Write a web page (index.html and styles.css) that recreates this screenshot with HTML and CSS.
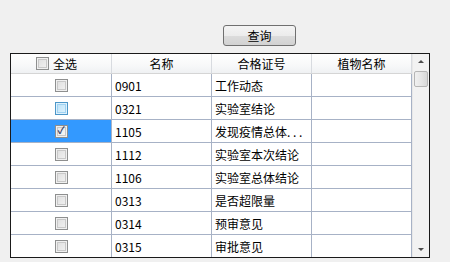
FILE: index.html
```html
<!DOCTYPE html>
<html lang="zh-CN">
<head>
    <meta charset="UTF-8">
    <title>查询</title>
    <link rel="stylesheet" href="styles.css">
</head>
<body>
    <div class="toolbar">
        <button class="query-btn">查询</button>
    </div>
    <div class="grid">
        <div class="grid-body">
            <div class="row head">
                <div class="cell check-col"><span class="box"></span><span class="label">全选</span></div>
                <div class="cell">名称</div>
                <div class="cell">合格证号</div>
                <div class="cell">植物名称</div>
            </div>
            <div class="row">
                <div class="cell check-col"><span class="box"></span></div>
                <div class="cell text">0901</div>
                <div class="cell text">工作动态</div>
                <div class="cell"></div>
            </div>
            <div class="row">
                <div class="cell check-col"><span class="box hover"></span></div>
                <div class="cell text">0321</div>
                <div class="cell text">实验室结论</div>
                <div class="cell"></div>
            </div>
            <div class="row">
                <div class="cell check-col selected"><span class="box checked">✓</span></div>
                <div class="cell text">1105</div>
                <div class="cell text">发现疫情总体. . .</div>
                <div class="cell"></div>
            </div>
            <div class="row">
                <div class="cell check-col"><span class="box"></span></div>
                <div class="cell text">1112</div>
                <div class="cell text">实验室本次结论</div>
                <div class="cell"></div>
            </div>
            <div class="row">
                <div class="cell check-col"><span class="box"></span></div>
                <div class="cell text">1106</div>
                <div class="cell text">实验室总体结论</div>
                <div class="cell"></div>
            </div>
            <div class="row">
                <div class="cell check-col"><span class="box"></span></div>
                <div class="cell text">0313</div>
                <div class="cell text">是否超限量</div>
                <div class="cell"></div>
            </div>
            <div class="row">
                <div class="cell check-col"><span class="box"></span></div>
                <div class="cell text">0314</div>
                <div class="cell text">预审意见</div>
                <div class="cell"></div>
            </div>
            <div class="row">
                <div class="cell check-col"><span class="box"></span></div>
                <div class="cell text">0315</div>
                <div class="cell text">审批意见</div>
                <div class="cell"></div>
            </div>
        </div>
        <div class="scrollbar">
            <div class="arrow up"></div>
            <div class="thumb"></div>
            <div class="track"></div>
            <div class="arrow down"></div>
        </div>
    </div>
</body>
</html>
```

FILE: styles.css
```css
* {
    margin: 0;
    padding: 0;
    box-sizing: border-box;
}

body {
    background: #f0f0f0;
    font-family: "Liberation Sans", "Noto Sans CJK SC", sans-serif;
    font-size: 12px;
    color: #000;
    width: 450px;
    height: 262px;
    overflow: hidden;
}

.toolbar {
    height: 53px;
    padding: 25px 0 0 223px;
}

.query-btn {
    width: 73px;
    height: 21px;
    border: 1px solid #707070;
    border-radius: 3px;
    background: linear-gradient(#f4f4f4 0%, #ececec 50%, #dcdcdc 51%, #d2d2d2 100%);
    font-family: "Noto Sans CJK SC", sans-serif;
    font-size: 12px;
    line-height: 18px;
    color: #000;
}

.grid {
    margin-left: 10px;
    width: 420px;
    height: 205px;
    border: 1px solid #1a1a1a;
    background: #fff;
    display: flex;
    overflow: hidden;
}

.grid-body {
    width: 401px;
    display: flex;
    flex-direction: column;
}

.row {
    display: grid;
    grid-template-columns: 101px 100px 100px 100px;
    height: 23px;
    flex-shrink: 0;
}

.cell {
    border-right: 1px solid #a7b2c6;
    border-bottom: 1px solid #a7b2c6;
    display: flex;
    align-items: center;
    white-space: nowrap;
    overflow: hidden;
}

.cell.text {
    padding-left: 3px;
    font-family: "Noto Sans CJK SC", sans-serif;
    padding-top: 1px;
}

.row.head {
    height: 20px;
    background: linear-gradient(#ffffff 0%, #f7f8f9 60%, #eef0f2 100%);
}

.row.head .cell {
    justify-content: center;
    border-right: 1px solid #d8dbe0;
    border-bottom: 1px solid #d5d5d5;
    font-family: "Noto Sans CJK SC", sans-serif;
}

.row.head .cell.check-col {
    justify-content: flex-start;
    padding-left: 25px;
}

.row.head .label {
    margin-left: 4px;
}

.check-col {
    justify-content: center;
}

.check-col.selected {
    background: #3399ff;
}

.box {
    width: 13px;
    height: 13px;
    border: 1px solid #8e8f8f;
    background: linear-gradient(135deg, #dcdcdc 0%, #f4f4f4 100%);
    box-shadow: inset 0 0 0 1px #f0f0f0, inset 0 0 0 2px #c8c8c8;
    display: flex;
    align-items: center;
    justify-content: center;
    font-size: 10px;
    font-weight: bold;
    color: #3a3f66;
    line-height: 1;
}

.box.hover {
    border-color: #4c96c8;
    background: linear-gradient(135deg, #b8e0f8 0%, #e2f4fd 100%);
    box-shadow: inset 0 0 0 1px #def1fc, inset 0 0 0 2px #9fd2f2;
}

.box.checked {
    border-color: #8e8f8f;
    background: linear-gradient(135deg, #e4e4e4 0%, #fafafa 100%);
}

.scrollbar {
    width: 17px;
    display: flex;
    flex-direction: column;
    background: #f2f2f2;
    border-left: 1px solid #e8e8e8;
}

.arrow {
    height: 17px;
    position: relative;
}

.arrow::after {
    content: "";
    position: absolute;
    left: 5px;
    border-left: 3px solid transparent;
    border-right: 3px solid transparent;
}

.arrow.up::after {
    top: 6px;
    border-bottom: 3px solid #4d4d4d;
}

.arrow.down::after {
    top: 8px;
    border-top: 3px solid #4d4d4d;
}

.thumb {
    height: 16px;
    margin: 0 1px;
    border: 1px solid #b5b5b5;
    border-radius: 2px;
    background: linear-gradient(90deg, #f0f0f0 0%, #e6e6e6 50%, #d8d8d8 100%);
}

.track {
    flex: 1;
}
```
